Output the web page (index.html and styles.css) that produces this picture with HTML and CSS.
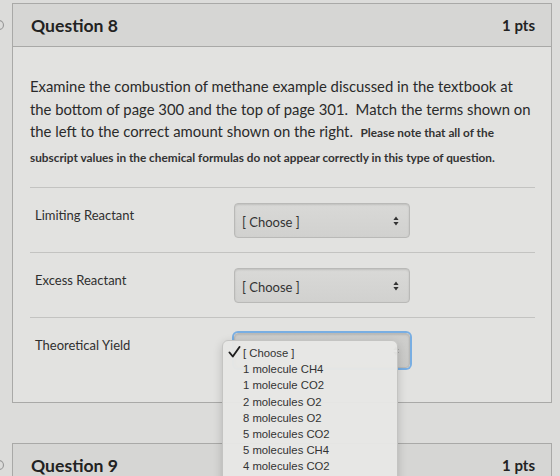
FILE: index.html
```html
<!DOCTYPE html>
<html lang="en">
<head>
<meta charset="utf-8">
<title>Quiz</title>
<link rel="stylesheet" href="styles.css">
</head>
<body>
<main class="quiz">
  <section class="question">
    <div class="gutter"><svg width="12" height="44" viewBox="0 0 12 44"><circle cx="-1" cy="22" r="4.5" fill="none" stroke="#9a9a9a" stroke-width="1.2"/></svg></div>
    <div class="card">
      <header class="card-head">
        <h2 class="q-title">Question 8</h2>
        <span class="q-pts">1 pts</span>
      </header>
      <div class="card-body">
        <p class="prompt">Examine the combustion of methane example discussed in the textbook at the bottom of page 300 and the top of page 301.&nbsp; Match the terms shown on the left to the correct amount shown on the right.&nbsp; <span class="note">Please note that all of the subscript values in the chemical formulas do not appear correctly in this type of question.</span></p>

        <div class="match-row">
          <div class="term">Limiting Reactant</div>
          <div class="picker">
            <div class="select"><span>[ Choose ]</span><svg class="updown" width="6" height="10" viewBox="0 0 6 10"><path d="M3 0.5 L5.6 4 H0.4 Z M3 9.5 L5.6 6 H0.4 Z" fill="#333"/></svg></div>
          </div>
        </div>

        <div class="match-row">
          <div class="term">Excess Reactant</div>
          <div class="picker">
            <div class="select"><span>[ Choose ]</span><svg class="updown" width="6" height="10" viewBox="0 0 6 10"><path d="M3 0.5 L5.6 4 H0.4 Z M3 9.5 L5.6 6 H0.4 Z" fill="#333"/></svg></div>
          </div>
        </div>

        <div class="match-row">
          <div class="term">Theoretical Yield</div>
          <div class="picker">
            <div class="select focused"><span></span><svg class="updown" width="6" height="10" viewBox="0 0 6 10"><path d="M3 0.5 L5.6 4 H0.4 Z M3 9.5 L5.6 6 H0.4 Z" fill="#333"/></svg></div>
            <ul class="menu">
              <li class="checked"><svg class="tick" width="13" height="12" viewBox="0 0 13 12"><path d="M1.5 6.5 L4.8 10.5 L11.5 1" fill="none" stroke="#1e1e1e" stroke-width="1.9" stroke-linecap="round" stroke-linejoin="round"/></svg>[ Choose ]</li>
              <li>1 molecule CH4</li>
              <li>1 molecule CO2</li>
              <li>2 molecules O2</li>
              <li>8 molecules O2</li>
              <li>5 molecules CO2</li>
              <li>5 molecules CH4</li>
              <li>4 molecules CO2</li>
              <li>2 molecules H2O</li>
            </ul>
          </div>
        </div>
      </div>
    </div>
  </section>

  <section class="question">
    <div class="gutter"><svg width="12" height="44" viewBox="0 0 12 44"><circle cx="-1" cy="22" r="4.5" fill="none" stroke="#9a9a9a" stroke-width="1.2"/></svg></div>
    <div class="card">
      <header class="card-head">
        <h2 class="q-title">Question 9</h2>
        <span class="q-pts">1 pts</span>
      </header>
      <div class="card-body">
        <p class="prompt">&nbsp;</p>
      </div>
    </div>
  </section>
</main>
</body>
</html>
```

FILE: styles.css
```css
* { box-sizing: border-box; }

html, body {
  margin: 0;
  height: 100%;
  overflow: hidden;
}

body {
  background: #dcdcda;
  font-family: Lato, "Open Sans", sans-serif;
  color: #2b2b2b;
}

.quiz {
  display: flex;
  flex-direction: column;
  gap: 40px;
  padding: 3px 8px 0 0;
}

.question {
  display: flex;
}

.gutter {
  width: 12px;
  flex: none;
  overflow: hidden;
}

.card {
  width: 540px;
  border: 1px solid #a9a9a7;
  background: #e2e2e0;
}

.card-head {
  height: 43px;
  display: flex;
  align-items: center;
  justify-content: space-between;
  padding: 0 16px 0 18px;
  background: #d6d6d4;
  border-bottom: 1px solid #a9a9a7;
}

.q-title {
  margin: 0;
  font-size: 17.6px;
  font-weight: 700;
  color: #222;
}

.q-pts {
  font-size: 15px;
  font-weight: 700;
  color: #222;
}

.card-body {
  padding: 28px 16px 20px 17px;
}

.prompt {
  margin: 0 0 18px;
  font-size: 14.85px;
  line-height: 22.5px;
  color: #2a2a2a;
}

.note {
  font-size: 11.8px;
  font-weight: 700;
  color: #333;
}

.match-row {
  display: flex;
  align-items: flex-start;
  padding: 15px 0 14px 5px;
  border-top: 1px solid #c3c3c1;
}

.term {
  width: 199px;
  margin-top: 3px;
  font-size: 13px;
  line-height: 18px;
  color: #2f2f2f;
}

.picker {
  position: relative;
}

.select {
  width: 176px;
  height: 35px;
  display: flex;
  align-items: center;
  justify-content: space-between;
  padding: 2px 10px 0 7px;
  border: 1px solid #b9b9b7;
  border-radius: 4px;
  background: linear-gradient(#d9d9d7, #d1d1cf);
  box-shadow: inset 0 1px 2px rgba(0, 0, 0, 0.12);
  font-size: 13px;
  color: #333;
}

.select.focused {
  box-shadow: 0 0 0 2px #79aee2, inset 0 1px 2px rgba(0, 0, 0, 0.12);
  background: linear-gradient(#cfcfcd, #c9c9c7);
}

.updown {
  display: block;
  margin-top: -2px;
}

/* open option list of the focused select */
.menu {
  position: absolute;
  left: -12px;
  top: 7px;
  width: 176px;
  margin: 0;
  padding: 4px 0 0;
  list-style: none;
  background: rgba(231, 231, 229, 0.97);
  border: 1px solid #c4c4c2;
  border-radius: 6px;
  box-shadow: 0 3px 10px rgba(0, 0, 0, 0.18);
  font-family: "Liberation Sans", Arial, sans-serif;
  font-size: 11.3px;
  line-height: 16.2px;
  color: #333;
}

.menu li {
  padding-left: 20px;
  white-space: nowrap;
}

.tick {
  display: inline-block;
  vertical-align: -1px;
  margin-left: -15px;
  margin-right: 2px;
}
```
